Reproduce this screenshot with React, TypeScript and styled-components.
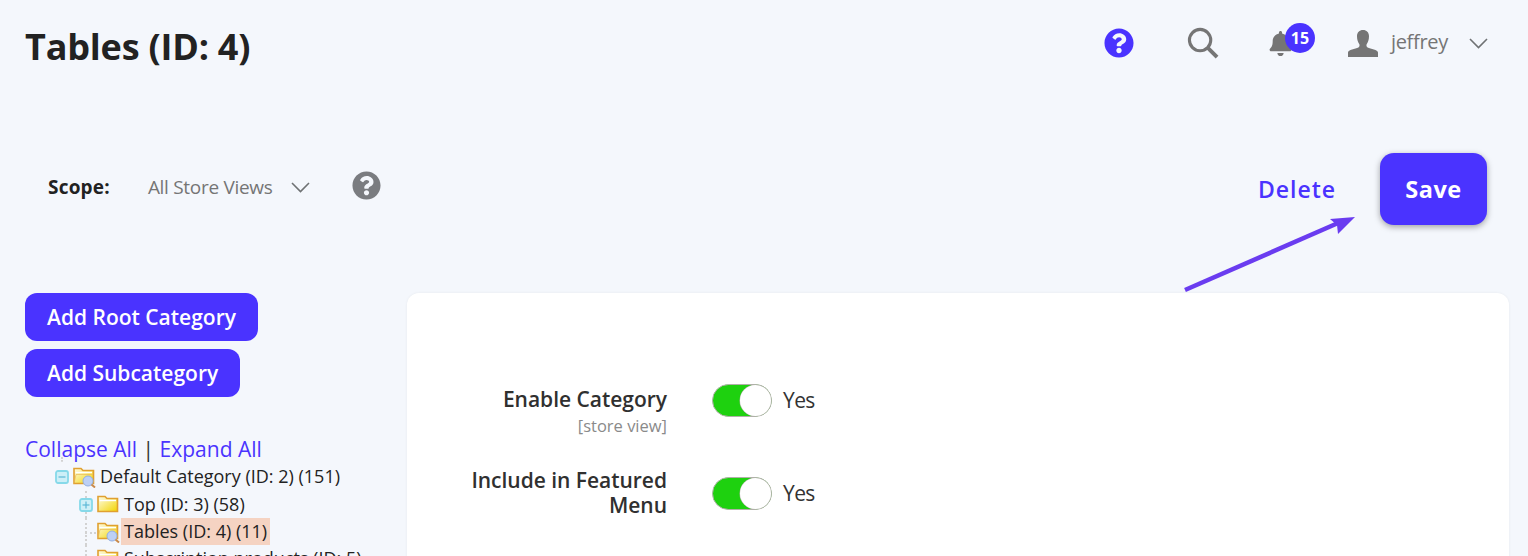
import React from "react";
import styled, { createGlobalStyle } from "styled-components";
import { FaQuestionCircle, FaBell } from "react-icons/fa";

const Global = createGlobalStyle`
  html, body { margin: 0; padding: 0; background: #f4f7fc; }
  body { font-family: "Open Sans", "Liberation Sans", sans-serif; color: #2b2b2b; }
  * { box-sizing: border-box; }
`;

const Page = styled.div`
  position: relative;
  width: 1528px;
  height: 556px;
  overflow: hidden;
  background: #f4f7fc;
`;

const TopBar = styled.header`
  display: flex;
  align-items: center;
  justify-content: space-between;
  height: 94px;
  padding: 0 40px 0 25px;
`;

const Title = styled.h1`
  margin: 0 0 2px;
  font-size: 36px;
  font-weight: 700;
  letter-spacing: -0.2px;
  color: #222;
`;

const TopIcons = styled.div`
  display: flex;
  align-items: center;
  margin-bottom: 8px;
`;

const IconSlot = styled.div<{ $w: number }>`
  position: relative;
  display: flex;
  align-items: center;
  width: ${(p) => p.$w}px;
  height: 40px;
`;

const Badge = styled.span`
  position: absolute;
  left: 17px;
  top: 0;
  width: 30px;
  height: 30px;
  border-radius: 50%;
  background: #4a33ff;
  color: #fff;
  font-size: 16px;
  font-weight: 700;
  display: flex;
  align-items: center;
  justify-content: center;
`;

const UserName = styled.span`
  font-size: 20px;
  color: #757575;
  margin: -3px 21px 0 13px;
  letter-spacing: -0.3px;
`;

const ActionBar = styled.div`
  display: flex;
  align-items: flex-start;
  justify-content: space-between;
  height: 199px;
  padding: 59px 41px 0 48px;
`;

const Scope = styled.div`
  display: flex;
  align-items: center;
  height: 68px;
`;

const ScopeLabel = styled.span`
  font-size: 19px;
  font-weight: 700;
  letter-spacing: 0.2px;
  color: #222;
  margin-right: 38px;
`;

const ScopeValue = styled.span`
  font-size: 19px;
  color: #757575;
  margin-right: 19px;
  letter-spacing: -0.3px;
`;

const ScopeHelp = styled.span`
  display: flex;
  margin: -4px 0 0 42px;
  color: #7a7c80;
`;

const Actions = styled.div`
  display: flex;
  align-items: center;
`;

const DeleteLink = styled.a`
  font-size: 23px;
  font-weight: 600;
  letter-spacing: 1px;
  color: #4a33ff;
  margin: 0 44px 0 0;
`;

const SaveButton = styled.button`
  width: 107px;
  height: 72px;
  padding: 0;
  border: 0;
  border-radius: 14px;
  background: #4a33ff;
  color: #fff;
  font-family: inherit;
  font-size: 23.5px;
  font-weight: 700;
  letter-spacing: 0.5px;
  box-shadow: 0 2px 6px rgba(0, 0, 0, 0.35);
`;

const Arrow = styled.svg`
  position: absolute;
  left: 1180px;
  top: 210px;
`;

const Main = styled.div`
  display: flex;
  align-items: flex-start;
  padding: 0 19px 0 25px;
`;

const Sidebar = styled.aside`
  width: 382px;
  flex: none;
`;

const ButtonStack = styled.div`
  display: flex;
  flex-direction: column;
  align-items: flex-start;
  gap: 8px;
`;

const AddButton = styled.button`
  height: 48px;
  padding: 0 22px;
  border: 0;
  border-radius: 12px;
  background: #4a33ff;
  color: #fff;
  font-family: inherit;
  font-size: 21px;
  font-weight: 600;
`;

const TreeLinks = styled.div`
  margin-top: 39px;
  font-size: 21px;
  line-height: 27px;
  color: #333;
`;

const TreeLink = styled.a`
  color: #4a33ff;
`;

const Tree = styled.div`
  margin-top: 0;
`;

const TreeRow = styled.div<{ $indent: number }>`
  position: relative;
  display: flex;
  align-items: center;
  height: 27px;
  padding-left: ${(p) => p.$indent}px;
  font-size: 18px;
  color: #222;
  white-space: nowrap;
  &:first-child {
    margin-bottom: 1px;
  }
`;

const RowText = styled.span<{ $active?: boolean }>`
  padding: 0 3px;
  line-height: 27px;
  background: ${(p) => (p.$active ? "#f5d3c2" : "transparent")};
`;

const VLine = styled.span<{ $left: number; $top?: number; $bottom?: number }>`
  position: absolute;
  left: ${(p) => p.$left}px;
  top: ${(p) => p.$top ?? 0}px;
  bottom: ${(p) => p.$bottom ?? 0}px;
  border-left: 2px dotted #d2d2d2;
`;

const HLine = styled.span<{ $left: number; $w: number }>`
  position: absolute;
  left: ${(p) => p.$left}px;
  top: 14px;
  width: ${(p) => p.$w}px;
  border-top: 2px dotted #d2d2d2;
`;

const Expander = styled.span`
  position: relative;
  display: flex;
  width: 14px;
  height: 14px;
  margin-right: 4px;
  flex: none;
`;

const Panel = styled.section`
  flex: 1;
  height: 300px;
  padding-top: 91px;
  background: #fff;
  border-radius: 12px;
  box-shadow: 0 0 3px rgba(0, 0, 0, 0.06);
`;

const FormRow = styled.div<{ $mb: number; $center?: boolean }>`
  display: flex;
  align-items: ${(p) => (p.$center ? "center" : "flex-start")};
  margin-bottom: ${(p) => p.$mb}px;
`;

const LabelBox = styled.div<{ $pt?: number }>`
  width: 260px;
  flex: none;
  padding: ${(p) => p.$pt ?? 0}px 0 0 40px;
  text-align: right;
`;

const FieldLabel = styled.div`
  font-size: 21px;
  font-weight: 600;
  line-height: 25px;
  color: #303030;
  letter-spacing: -0.02px;
`;

const ScopeNote = styled.div`
  font-size: 16.500px;
  line-height: 20px;
  margin-top: 4px;
  color: #8a8a8a;
`;

const Toggle = styled.div`
  position: relative;
  width: 60px;
  height: 33px;
  margin: 0 11px 0 45px;
  border-radius: 17px;
  background: #1ed10f;
  border: 1px solid #b0b0a8;
  flex: none;
  &::after {
    content: "";
    position: absolute;
    right: 0;
    top: 0;
    width: 31px;
    height: 31px;
    border-radius: 50%;
    background: #fff;
    box-shadow: 0 0 0 0.5px #b0b0a8;
  }
`;

const ToggleText = styled.span`
  font-size: 21px;
  line-height: 33px;
  color: #333;
  letter-spacing: -0.6px;
`;

const Chevron = () => (
  <svg width="19" height="11" viewBox="0 0 19 11" fill="none">
    <path d="M1 1l8.500 8.500L18 1" stroke="#6f7274" strokeWidth="1.600" />
  </svg>
);

const SearchIcon = () => (
  <svg width="32" height="32" viewBox="0 0 33 33" fill="none">
    <circle cx="13.500" cy="13.500" r="11" stroke="#757575" strokeWidth="3.200" />
    <path d="M21.500 21.500L31 31" stroke="#757575" strokeWidth="4" />
  </svg>
);

const UserIcon = () => (
  <svg width="30" height="27" viewBox="0 0 30 27">
    <path
      d="M15 0c3.600 0 6 2.400 6 6.200 0 3.400-1 6-2.200 7.800-.6.900-.5 2.800.8 3.400 3 1.300 10.400 2.300 10.400 5V27H0v-4.600c0-2.700 7.400-3.700 10.400-5 1.300-.6 1.400-2.500.8-3.400C10 12.200 9 9.600 9 6.200 9 2.400 11.400 0 15 0z"
      fill="#757575"
    />
  </svg>
);

const FolderIcon = ({ open, search }: { open?: boolean; search?: boolean }) => (
  <svg width="24" height="22" viewBox="0 0 24 22" style={{ flex: "none" }}>
    <defs>
      <linearGradient id="fold" x1="0" y1="0" x2="1" y2="1">
        <stop offset="0" stopColor="#fffde8" />
        <stop offset="1" stopColor="#f2d400" />
      </linearGradient>
    </defs>
    <path d="M1 2.500h7l2 2h10.500v13H1z" fill="url(#fold)" stroke="#e0a030" strokeWidth="1.600" />
    <path d="M2.500 6.500h16.500" stroke="#fff" strokeWidth="1.400" />
    {search && (
      <>
        <circle cx="15" cy="15" r="5" fill="#bcd0f5" stroke="#92aee0" />
        <path d="M18.500 18.500l3.500 3" stroke="#c98a4a" strokeWidth="2" />
      </>
    )}
    {open && <path d="M1 17.500l2-9h17" fill="none" stroke="#e9b95a" strokeWidth="0.700" />}
  </svg>
);

const ExpanderIcon = ({ plus }: { plus?: boolean }) => (
  <svg width="14" height="14" viewBox="0 0 14 14">
    <rect x="1" y="1" width="12" height="12" rx="2" fill="#cdeff7" stroke="#86d9e9" strokeWidth="1.800" />
    <path d="M3.500 7h7" stroke="#5cb8d6" strokeWidth="1.200" />
    {plus && <path d="M7 3.500v7" stroke="#5cb8d6" strokeWidth="1.200" />}
  </svg>
);

export default function App() {
  return (
    <Page>
      <Global />
      <TopBar>
        <Title>Tables (ID: 4)</Title>
        <TopIcons>
          <IconSlot $w={83}>
            <FaQuestionCircle size={30} color="#4a33ff" />
          </IconSlot>
          <IconSlot $w={81}>
            <SearchIcon />
          </IconSlot>
          <IconSlot $w={80}>
            <FaBell size={25} color="#757575" />
            <Badge>15</Badge>
          </IconSlot>
          <UserIcon />
          <UserName>jeffrey</UserName>
          <Chevron />
        </TopIcons>
      </TopBar>
      <ActionBar>
        <Scope>
          <ScopeLabel>Scope:</ScopeLabel>
          <ScopeValue>All Store Views</ScopeValue>
          <Chevron />
          <ScopeHelp>
            <FaQuestionCircle size={29} />
          </ScopeHelp>
        </Scope>
        <Actions>
          <DeleteLink>Delete</DeleteLink>
          <SaveButton>Save</SaveButton>
        </Actions>
      </ActionBar>
      <Arrow width="180" height="85" viewBox="0 0 180 85">
        <path d="M5 80L165 10" stroke="#6a3cf0" strokeWidth="4.500" />
        <path d="M175 7L150 9l7 6 1 9z" fill="#6a3cf0" />
      </Arrow>
      <Main>
        <Sidebar>
          <ButtonStack>
            <AddButton>Add Root Category</AddButton>
            <AddButton>Add Subcategory</AddButton>
          </ButtonStack>
          <TreeLinks>
            <TreeLink>Collapse All</TreeLink> | <TreeLink>Expand All</TreeLink>
          </TreeLinks>
          <Tree>
            <TreeRow $indent={30}>
              <VLine $left={36} $top={-6} $bottom={28} />
              <Expander>
                <ExpanderIcon />
              </Expander>
              <FolderIcon open search />
              <RowText>Default Category (ID: 2) (151)</RowText>
            </TreeRow>
            <TreeRow $indent={54}>
              <VLine $left={60} />
              <Expander>
                <ExpanderIcon plus />
              </Expander>
              <FolderIcon />
              <RowText>Top (ID: 3) (58)</RowText>
            </TreeRow>
            <TreeRow $indent={72}>
              <VLine $left={60} />
              <HLine $left={60} $w={11} />
              <FolderIcon open search />
              <RowText $active>Tables (ID: 4) (11)</RowText>
            </TreeRow>
            <TreeRow $indent={72}>
              <VLine $left={60} />
              <HLine $left={60} $w={11} />
              <FolderIcon />
              <RowText>Subscription products (ID: 5)</RowText>
            </TreeRow>
          </Tree>
        </Sidebar>
        <Panel>
          <FormRow $mb={32}>
            <LabelBox $pt={3}>
              <FieldLabel>Enable Category</FieldLabel>
              <ScopeNote>[store view]</ScopeNote>
            </LabelBox>
            <Toggle />
            <ToggleText>Yes</ToggleText>
          </FormRow>
          <FormRow $mb={0} $center>
            <LabelBox>
              <FieldLabel>Include in Featured Menu</FieldLabel>
            </LabelBox>
            <Toggle />
            <ToggleText>Yes</ToggleText>
          </FormRow>
        </Panel>
      </Main>
    </Page>
  );
}
